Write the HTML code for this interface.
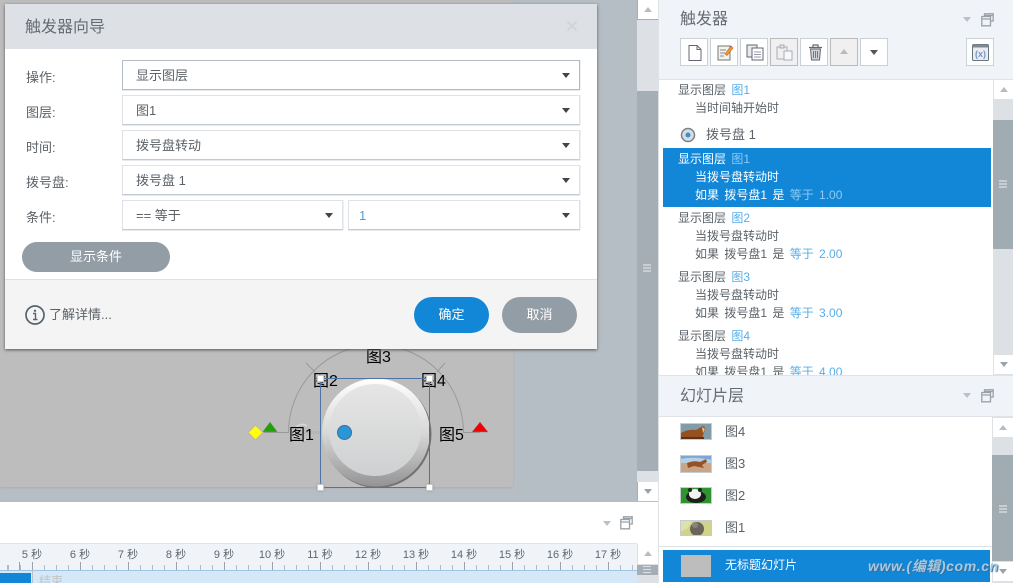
<!DOCTYPE html>
<html><head><meta charset="utf-8"><style>
*{box-sizing:border-box}
html,body{margin:0;padding:0;width:1013px;height:583px;overflow:hidden}
body{position:relative;background:#b6bec5;font-family:"Liberation Sans","Noto Sans CJK SC",sans-serif;color:#5a6268;font-size:12px}
div,span.a,svg{position:absolute}
.t{white-space:nowrap;line-height:18px;height:18px}
.b{color:#58aee8}
.f{left:122px;width:458px;height:30px;background:#fff;border:1px solid #dfe3e8;border-bottom:1px solid #c3cbd2;box-shadow:0 1px 0 #e6eaee,1px 0 0 #eef0f3;font-size:13px;line-height:29px;padding-left:13px;color:#5a6268;white-space:nowrap}
.f i{position:absolute;right:9px;top:12px;width:0;height:0;border-left:4.5px solid transparent;border-right:4.5px solid transparent;border-top:5px solid #444}
.l{left:26px;font-size:13px;line-height:18px;white-space:nowrap}
.tb{top:38px;width:28px;height:28px;background:#fff;border:1px solid #c9d0d6}
.sb{background:#fff;width:20px;height:20px}
.up{position:absolute;left:6px;top:7px;width:0;height:0;border-left:4px solid transparent;border-right:4px solid transparent;border-bottom:5px solid #b5bdc4}
.dn{position:absolute;left:6px;top:7px;width:0;height:0;border-left:4px solid transparent;border-right:4px solid transparent;border-top:5px solid #9aa3aa}
.gr{width:10px;height:2px;background:#c9ced2;box-shadow:0 4px 0 #c9ced2,0 8px 0 #c9ced2}
.lab{color:#000;font-size:16px;line-height:18px;white-space:nowrap}
.h{width:7px;height:7px;background:#fff;border:1px solid #c8c8c8;box-shadow:0 0 2px #999}
.th{left:680px;width:32px;height:17px;overflow:hidden}
.r{top:548px;font-size:11px;line-height:14px;white-space:nowrap;text-align:center;width:40px;color:#5f676d}
.list{word-spacing:2px}
</style></head><body>

<!-- canvas -->
<div style="left:0;top:0;width:513px;height:487px;background:#bdbdbd;box-shadow:0 1px 2px #aab"></div>

<!-- dial -->
<svg style="left:240px;top:340px" width="280" height="160" viewBox="0 0 280 160">
<path d="M24 92.500H48.500A87.500 87.500 0 0 1 223.500 92.500H240" fill="none" stroke="#9a9a9a" stroke-width="1"/>
<path d="M66 23L75 32M205 23L197 32" stroke="#9a9a9a" fill="none"/>
<polygon points="30,82 37.500,92 22.500,92" fill="#22a00c" stroke="#8a9a80" stroke-width=".5"/>
<polygon points="240,82 248,92 232,92" fill="#ee0000" stroke="#a08080" stroke-width=".5"/>
<polygon points="15.500,85 23,92.500 15.500,100 8,92.500" fill="#ffff00" stroke="#b8b8a0"/>
<defs>
<linearGradient id="k1" x1="0" y1="0" x2="0" y2="1"><stop offset="0" stop-color="#ffffff"/><stop offset=".5" stop-color="#d8d8d8"/><stop offset="1" stop-color="#949494"/></linearGradient>
<linearGradient id="k2" x1="0" y1="0" x2="0" y2="1"><stop offset="0" stop-color="#e6e6e6"/><stop offset="1" stop-color="#cfd0d1"/></linearGradient>
</defs>
<rect x="62" y="91" width="20" height="3" fill="#b0b0b0" opacity=".6"/>
<path d="M67 86A8 8 0 1 0 68 98" fill="none" stroke="#d8d8d8" stroke-width="1.500"/>
<circle cx="137.500" cy="94" r="54" fill="#5a5a5a" opacity=".75"/>
<circle cx="136" cy="92.500" r="54" fill="url(#k1)"/>
<circle cx="135" cy="90" r="46" fill="url(#k2)"/>
<circle cx="104.500" cy="92.500" r="7" fill="#2a96d6" stroke="#3b6f96" stroke-width="1"/>
</svg>

<div class="lab" style="left:366px;top:349px">图3</div>
<div class="lab" style="left:313px;top:373px">图2</div>
<div class="lab" style="left:421px;top:373px">图4</div>
<div class="lab" style="left:289px;top:427px">图1</div>
<div class="lab" style="left:439px;top:427px">图5</div>

<div style="left:320px;top:378px;width:110px;height:110px;border:1px solid #4c74a4"></div>
<div class="h" style="left:317px;top:375px"></div>
<div class="h" style="left:426px;top:375px"></div>
<div class="h" style="left:317px;top:484px"></div>
<div class="h" style="left:426px;top:484px"></div>

<!-- dialog -->
<div style="left:5px;top:4px;width:592px;height:345px;background:#fff;box-shadow:0 1px 3px #555"></div>
<div style="left:5px;top:4px;width:592px;height:45px;background:#dde1e5"></div>
<div class="t" style="left:25px;top:18px;font-size:16px;line-height:20px;height:20px;color:#666c72">触发器向导</div>
<svg style="left:566px;top:20px" width="12" height="12"><path d="M1.500 1.500L10.500 10.500M10.500 1.500L1.500 10.500" stroke="#d2d4d6" stroke-width="2"/></svg>

<div class="l" style="top:69px">操作:</div>
<div class="l" style="top:104px">图层:</div>
<div class="l" style="top:139px">时间:</div>
<div class="l" style="top:174px">拨号盘:</div>
<div class="l" style="top:209px">条件:</div>

<div class="f" style="top:60px;border-color:#b4bcc3">显示图层<i></i></div>
<div class="f" style="top:95px">图1<i></i></div>
<div class="f" style="top:130px">拨号盘转动<i></i></div>
<div class="f" style="top:165px">拨号盘 1<i></i></div>
<div class="f" style="top:200px;width:221px">== 等于<i></i></div>
<div class="f" style="top:200px;left:348px;width:232px;padding-left:10px;color:#4a9fdc">1<i></i></div>

<div style="left:22px;top:242px;width:148px;height:30px;border-radius:15px;background:#939da5;color:#fff;font-size:13px;line-height:30px;text-align:center">显示条件</div>

<div style="left:5px;top:279px;width:592px;height:70px;background:#f4f4f4;border-top:1px solid #dde1e5"></div>
<svg style="left:24px;top:304px" width="22" height="22"><circle cx="11" cy="11" r="9" fill="none" stroke="#56646e" stroke-width="1.700"/><circle cx="11" cy="6.800" r="1.200" fill="#56646e"/><path d="M9 9.500H11.500V15M9 15.500H13.500" stroke="#56646e" stroke-width="1.400" fill="none"/></svg>
<div class="t" style="left:49px;top:306px;font-size:13px">了解详情...</div>
<div style="left:414px;top:297px;width:75px;height:36px;border-radius:18px;background:#1287d8;color:#fff;font-size:13px;line-height:36px;text-align:center">确定</div>
<div style="left:502px;top:297px;width:75px;height:36px;border-radius:18px;background:#939da5;color:#fff;font-size:13px;line-height:36px;text-align:center">取消</div>

<!-- canvas scrollbar -->
<div style="left:637px;top:0;width:21px;height:501px;background:#a5aeb5"></div>
<div class="sb" style="left:638px;top:0;height:19px"><i class="up"></i></div>
<div style="left:637px;top:20px;width:21px;height:71px;background:#dde1e5"></div>
<div style="left:637px;top:471px;width:21px;height:11px;background:#dde1e5"></div>
<div class="sb" style="left:638px;top:482px;height:19px"><i class="dn"></i></div>
<div class="gr" style="left:643px;top:264px;width:8px;height:1.500px;box-shadow:0 3px 0 #c9ced2,0 6px 0 #c9ced2"></div>

<!-- timeline -->
<div style="left:0;top:502px;width:658px;height:42px;background:#fff"></div>
<div style="left:0;top:543px;width:637px;height:27px;background:#f0f3f7;border-top:1px solid #dfe3e8"></div>
<div style="left:0;top:565px;width:637px;height:5px;background:repeating-linear-gradient(90deg,#b4bbc1 0,#b4bbc1 1px,transparent 1px,transparent 12px);background-position:8px 0"></div>
<div style="left:0;top:562px;width:637px;height:8px;background:repeating-linear-gradient(90deg,#9aa3aa 0,#9aa3aa 1px,transparent 1px,transparent 48px);background-position:32px 0"></div>
<div style="left:0;top:570px;width:637px;height:13px;background:#d6e8f7;border-top:1px solid #9cc6e6"></div>
<div style="left:0;top:573px;width:31px;height:10px;background:#1287d8"></div>
<div style="left:32px;top:570px;width:1px;height:13px;background:#b8c0c6"></div>
<div class="t" style="left:39px;top:572px;color:#bfc4c8">结束</div>
<div class="r" style="left:12px">5 秒</div>
<div class="r" style="left:60px">6 秒</div>
<div class="r" style="left:108px">7 秒</div>
<div class="r" style="left:156px">8 秒</div>
<div class="r" style="left:204px">9 秒</div>
<div class="r" style="left:252px">10 秒</div>
<div class="r" style="left:300px">11 秒</div>
<div class="r" style="left:348px">12 秒</div>
<div class="r" style="left:396px">13 秒</div>
<div class="r" style="left:444px">14 秒</div>
<div class="r" style="left:492px">15 秒</div>
<div class="r" style="left:540px">16 秒</div>
<div class="r" style="left:588px">17 秒</div>
<div style="left:603px;top:521px;width:0;height:0;border-left:4px solid transparent;border-right:4px solid transparent;border-top:5px solid #b9c1c8"></div>
<svg style="left:620px;top:516px" width="13" height="14"><path d="M3.500 3V.8H12.200V8H10M.8 3.500H9.500V12.800H.8Z M.8 6H9.500M3.500 2.500H12" fill="none" stroke="#99a2a9" stroke-width="1.300"/></svg>
<div style="left:637px;top:544px;width:21px;height:39px;background:#dde1e5"></div>
<div class="sb" style="left:638px;top:544px;height:20px"><i class="up"></i></div>
<div style="left:637px;top:565px;width:21px;height:10px;background:#a5aeb5"></div>
<div class="gr" style="left:643px;top:566px;width:8px;height:1px;box-shadow:0 3px 0 #dde1e5,0 6px 0 #dde1e5;background:#dde1e5"></div>

<!-- right panel -->
<div style="left:658px;top:0;width:355px;height:583px;background:#fff;border-left:1px solid #dfe3e8"></div>
<div style="left:659px;top:0;width:354px;height:80px;background:#f0f3f7;border-bottom:1px solid #dfe3e8"></div>
<div class="t" style="left:680px;top:10px;font-size:16px;line-height:20px;height:20px;color:#666c72">触发器</div>
<div style="left:963px;top:17px;width:0;height:0;border-left:4px solid transparent;border-right:4px solid transparent;border-top:5px solid #b9c1c8"></div>
<svg style="left:981px;top:13px" width="13" height="14"><path d="M3.500 3V.8H12.200V8H10M.8 3.500H9.500V12.800H.8Z M.8 6H9.500M3.500 2.500H12" fill="none" stroke="#99a2a9" stroke-width="1.300"/></svg>

<div class="tb" style="left:680px"><svg style="left:7px;top:6px" width="14" height="16"><path d="M1 .5H9L13 4.500V15.500H1Z M9 .5V4.500H13" fill="#fff" stroke="#667" /></svg></div>
<div class="tb" style="left:710px"><svg style="left:6px;top:5px" width="17" height="17"><rect x="1" y="2" width="12" height="14" fill="#f2f2ee" stroke="#777"/><path d="M3 6H9M3 9H8M3 12H7" stroke="#888"/><path d="M8 10L14 2L16 4L10 11.500Z" fill="#f0a020" stroke="#c05030" stroke-width=".6"/></svg></div>
<div class="tb" style="left:740px"><svg style="left:5px;top:5px" width="18" height="17"><rect x="1" y="1" width="10" height="12" fill="#e8ebee" stroke="#667"/><rect x="6" y="4" width="11" height="12" fill="#fff" stroke="#667"/><path d="M8 8H15M8 10.500H15M8 13H15" stroke="#99a"/></svg></div>
<div class="tb" style="left:770px;background:#f0f0f0;border-color:#bbb"><svg style="left:5px;top:5px" width="18" height="17"><rect x="1" y="3" width="10" height="12" fill="none" stroke="#aab"/><rect x="4" y="1" width="4" height="3" fill="#e6e6e6" stroke="#aab"/><rect x="8" y="7" width="8" height="9" fill="#f8f8f8" stroke="#aab"/></svg></div>
<div class="tb" style="left:800px"><svg style="left:7px;top:5px" width="15" height="17"><path d="M1 3.500H14M5 3V1H10V3" fill="none" stroke="#667" stroke-width="1.200"/><path d="M2.500 5L3.500 16H11.500L12.500 5Z" fill="#cfd3d6" stroke="#667"/><path d="M5.500 7V14M7.500 7V14M9.500 7V14" stroke="#778"/></svg></div>
<div class="tb" style="left:830px;background:#f0f0f0;border-color:#bbb"><i class="up" style="left:9px;top:10px"></i></div>
<div class="tb" style="left:860px"><i class="dn" style="left:9px;top:11px;border-top-color:#555"></i></div>
<div class="tb" style="left:966px"><svg style="left:5px;top:5px" width="17" height="17"><rect x=".5" y=".5" width="16" height="16" rx="1" fill="#e8edf2" stroke="#667580"/><rect x=".5" y=".5" width="16" height="3" fill="#7c8892"/><text x="8.500" y="13" font-size="9" font-weight="bold" text-anchor="middle" fill="#7a93c4" font-family="Liberation Sans">(x)</text></svg></div>

<!-- trigger list -->
<div class="list" style="left:659px;top:81px;width:334px;height:294px;overflow:hidden;background:#fff">
  <div class="t" style="left:19px;top:0">显示图层 <span class="b">图1</span></div>
  <div class="t" style="left:36px;top:18px">当时间轴开始时</div>
  <svg style="left:20px;top:45px" width="18" height="18"><circle cx="9" cy="9" r="6.500" fill="#d8dde0" stroke="#77838c" stroke-width="1.500"/><circle cx="9" cy="9" r="2.500" fill="#3a8fc8"/></svg>
  <div class="t" style="left:47px;top:45px;font-size:13px;word-spacing:0">拨号盘 1</div>
  <div style="left:4px;top:67px;width:328px;height:59px;background:#1287d8"></div>
  <div class="t" style="left:19px;top:69px;color:#fff">显示图层 <span style="color:#8fcaf2">图1</span></div>
  <div class="t" style="left:36px;top:87px;color:#fff">当拨号盘转动时</div>
  <div class="t" style="left:36px;top:105px;color:#fff">如果 拨号盘1 是 <span style="color:#8fcaf2">等于 1.00</span></div>

  <div class="t" style="left:19px;top:128px">显示图层 <span class="b">图2</span></div>
  <div class="t" style="left:36px;top:146px">当拨号盘转动时</div>
  <div class="t" style="left:36px;top:164px">如果 拨号盘1 是 <span class="b">等于 2.00</span></div>

  <div class="t" style="left:19px;top:187px">显示图层 <span class="b">图3</span></div>
  <div class="t" style="left:36px;top:205px">当拨号盘转动时</div>
  <div class="t" style="left:36px;top:223px">如果 拨号盘1 是 <span class="b">等于 3.00</span></div>

  <div class="t" style="left:19px;top:246px">显示图层 <span class="b">图4</span></div>
  <div class="t" style="left:36px;top:264px">当拨号盘转动时</div>
  <div class="t" style="left:36px;top:282px">如果 拨号盘1 是 <span class="b">等于 4.00</span></div>
</div>
<div style="left:993px;top:80px;width:20px;height:295px;background:#dde1e5"></div>
<div class="sb" style="left:994px;top:80px;height:19px"><i class="up"></i></div>
<div style="left:993px;top:120px;width:20px;height:129px;background:#a1abb2"></div>
<div class="gr" style="left:999px;top:180px;width:8px;height:1.500px;box-shadow:0 3px 0 #c9ced2,0 6px 0 #c9ced2"></div>
<div class="sb" style="left:994px;top:355px;height:19px"><i class="dn"></i></div>

<!-- slide layers -->
<div style="left:659px;top:375px;width:354px;height:42px;background:#f0f3f7;border-top:1px solid #dfe3e8;border-bottom:1px solid #dfe3e8"></div>
<div class="t" style="left:680px;top:387px;font-size:16px;line-height:20px;height:20px;color:#666c72">幻灯片层</div>
<div style="left:963px;top:393px;width:0;height:0;border-left:4px solid transparent;border-right:4px solid transparent;border-top:5px solid #b9c1c8"></div>
<svg style="left:981px;top:389px" width="13" height="14"><path d="M3.500 3V.8H12.200V8H10M.8 3.500H9.500V12.800H.8Z M.8 6H9.500M3.500 2.500H12" fill="none" stroke="#99a2a9" stroke-width="1.300"/></svg>

<svg class="th" style="top:423px" width="32" height="17" viewBox="0 0 32 17"><rect width="32" height="17" fill="#7f9ca8"/><path d="M1 10Q8 6 16 7L23 3Q27 5 24 9L22 16H1Z" fill="#96501f"/><path d="M1 14H24V16H1Z" fill="#5c3218"/><path d="M22 4L25 6L23 10Z" fill="#d9c9a8"/><rect x=".5" y=".5" width="31" height="16" fill="none" stroke="#c5ccd2"/></svg>
<svg class="th" style="top:455px;height:18px" width="32" height="18" viewBox="0 0 32 18"><rect width="32" height="18" fill="#c9a585"/><rect width="32" height="8" fill="#7da6d4"/><path d="M0 4Q14 1 32 5V8H0Z" fill="#b8cfe2"/><path d="M7 8Q14 5 20 7L26 4L27 7L22 10L24 13L14 11L8 13Z" fill="#94522a"/><rect x=".5" y=".5" width="31" height="17" fill="none" stroke="#c5ccd2"/></svg>
<svg class="th" style="top:487px" width="32" height="17" viewBox="0 0 32 17"><rect width="32" height="17" fill="#2f9430"/><ellipse cx="16" cy="10" rx="10" ry="6" fill="#1e1e1e"/><ellipse cx="15" cy="7" rx="6" ry="5" fill="#f2f2f2"/><circle cx="10" cy="3" r="2" fill="#222"/><circle cx="20" cy="3" r="2" fill="#222"/><rect x=".5" y=".5" width="31" height="16" fill="none" stroke="#c5ccd2"/></svg>
<svg class="th" style="top:520px;height:16px" width="32" height="16" viewBox="0 0 32 16"><rect width="32" height="16" fill="#cfd48a"/><path d="M0 0H12L8 8L0 12Z" fill="#dfe2a8"/><ellipse cx="17" cy="9" rx="7" ry="7" fill="#6b655c"/><circle cx="15" cy="5" r="3" fill="#8a8478"/><rect x=".5" y=".5" width="31" height="15" fill="none" stroke="#c5ccd2"/></svg>
<div class="t" style="left:725px;top:423px;font-size:13px">图4</div>
<div class="t" style="left:725px;top:455px;font-size:13px">图3</div>
<div class="t" style="left:725px;top:487px;font-size:13px">图2</div>
<div class="t" style="left:725px;top:519px;font-size:13px">图1</div>
<div style="left:659px;top:546px;width:333px;height:1px;background:#dfe3e8"></div>
<div style="left:663px;top:550px;width:327px;height:32px;background:#1287d8"></div>
<div style="left:681px;top:555px;width:30px;height:22px;background:#bdbdbd"></div>
<div class="t" style="left:725px;top:556px;color:#fff">无标题幻灯片</div>
<div style="left:992px;top:417px;width:21px;height:166px;background:#dde1e5"></div>
<div class="sb" style="left:993px;top:418px;height:19px"><i class="up"></i></div>
<div style="left:992px;top:455px;width:21px;height:106px;background:#a1abb2"></div>
<div class="gr" style="left:999px;top:505px;width:8px;height:1.500px;box-shadow:0 3px 0 #c9ced2,0 6px 0 #c9ced2"></div>
<div class="sb" style="left:993px;top:562px;height:19px"><i class="dn"></i></div>

<!-- watermark -->
<div class="t" style="left:868px;top:557px;font-size:14px;font-weight:bold;font-style:italic;color:#a8c8e0;letter-spacing:.6px;text-shadow:1px 1px 1px #3a6f98">www.(编辑)com.cn</div>
</body></html>
